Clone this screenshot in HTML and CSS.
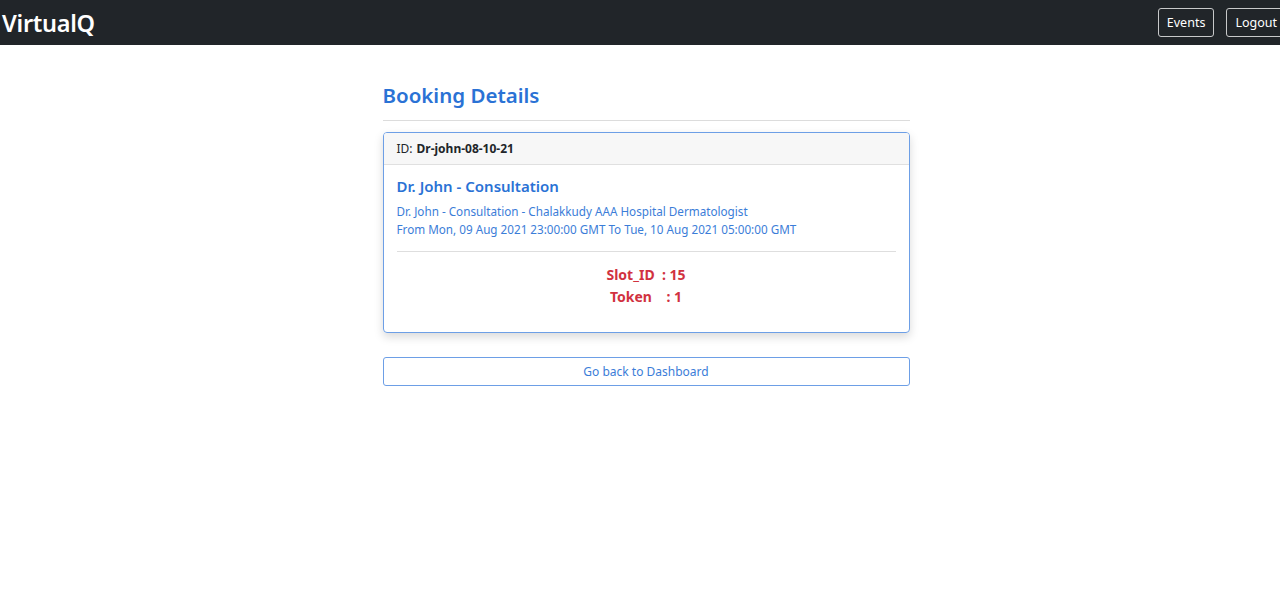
FILE: index.html
```html
<!DOCTYPE html>
<html>
<head>
<meta charset="utf-8">
<link rel="stylesheet" href="styles.css">
</head>
<body>
<nav class="navbar">
  <a class="brand">VirtualQ</a>
  <div class="nav-actions">
    <button class="nav-btn">Events</button>
    <button class="nav-btn">Logout</button>
  </div>
</nav>
<main class="container">
  <h2 class="title">Booking Details</h2>
  <hr class="divider">
  <div class="card">
    <div class="card-header">ID: <b>Dr-john-08-10-21</b></div>
    <div class="card-body">
      <h5 class="card-title">Dr. John - Consultation</h5>
      <p class="card-text">Dr. John - Consultation - Chalakkudy AAA Hospital Dermatologist</p>
      <p class="card-text">From Mon, 09 Aug 2021 23:00:00 GMT To Tue, 10 Aug 2021 05:00:00 GMT</p>
      <hr class="inner-divider">
      <div class="slot">
        <div>Slot_ID&nbsp; : 15</div>
        <div>Token&nbsp;&nbsp;&nbsp; : 1</div>
      </div>
    </div>
  </div>
  <button class="back-btn">Go back to Dashboard</button>
</main>
</body>
</html>
```
FILE: styles.css
```css
* { box-sizing: border-box; }
body {
  margin: 0;
  font-family: "Noto Sans", "Open Sans", sans-serif;
  background: #fff;
  color: #212529;
}
.navbar {
  height: 45px;
  background: #212529;
  display: flex;
  align-items: center;
  justify-content: space-between;
}
.brand {
  color: #fff;
  font-size: 23.5px;
  font-weight: 600;
  padding-left: 2px;
  letter-spacing: -0.3px;
}
.nav-actions {
  display: flex;
  gap: 12px;
  margin-right: -6px;
}
.nav-btn {
  background: transparent;
  color: #fff;
  border: 1px solid #c8c9ca;
  border-radius: 3px;
  font-family: inherit;
  font-size: 12.5px;
  height: 29px;
  padding: 0 8px;
}
.container {
  width: 527px;
  margin: 0 auto;
  padding-top: 34px;
  position: relative;
  left: 6px;
}
.title {
  margin: 0;
  font-size: 20.5px;
  font-weight: 600;
  color: #2a72d5;
  line-height: 22px;
  margin-top: 5px;
}
.divider {
  border: 0;
  border-top: 1px solid #dcdcdc;
  margin: 14px 0 11px;
}
.card {
  border: 1px solid #6d9fe6;
  border-radius: 4px;
  box-shadow: 0 4px 10px rgba(0,0,0,0.15);
  overflow: hidden;
}
.card-header {
  background: #f7f7f7;
  border-bottom: 1px solid #e0e0e0;
  height: 32px;
  display: flex;
  align-items: center;
  padding: 0 13px;
  font-size: 12px;
  gap: 4px;
}
.card-header b { font-weight: 700; }
.card-body {
  padding: 11px 13px 24px;
}
.card-title {
  margin: 0 0 6px;
  font-size: 15px;
  font-weight: 600;
  color: #2a72d5;
  line-height: 20px;
}
.card-text {
  margin: 0;
  font-size: 11.7px;
  line-height: 18px;
  color: #3b7dd8;
}
.inner-divider {
  border: 0;
  border-top: 1px solid #dedede;
  margin: 13px 0 12px;
}
.slot {
  text-align: center;
  color: #d1323f;
  font-weight: 700;
  font-size: 14px;
  line-height: 22px;
}
.back-btn {
  margin-top: 24px;
  width: 100%;
  height: 29px;
  background: #fff;
  border: 1px solid #6d9fe6;
  border-radius: 3px;
  color: #3b7dd8;
  font-family: inherit;
  font-size: 12px;
}
```
